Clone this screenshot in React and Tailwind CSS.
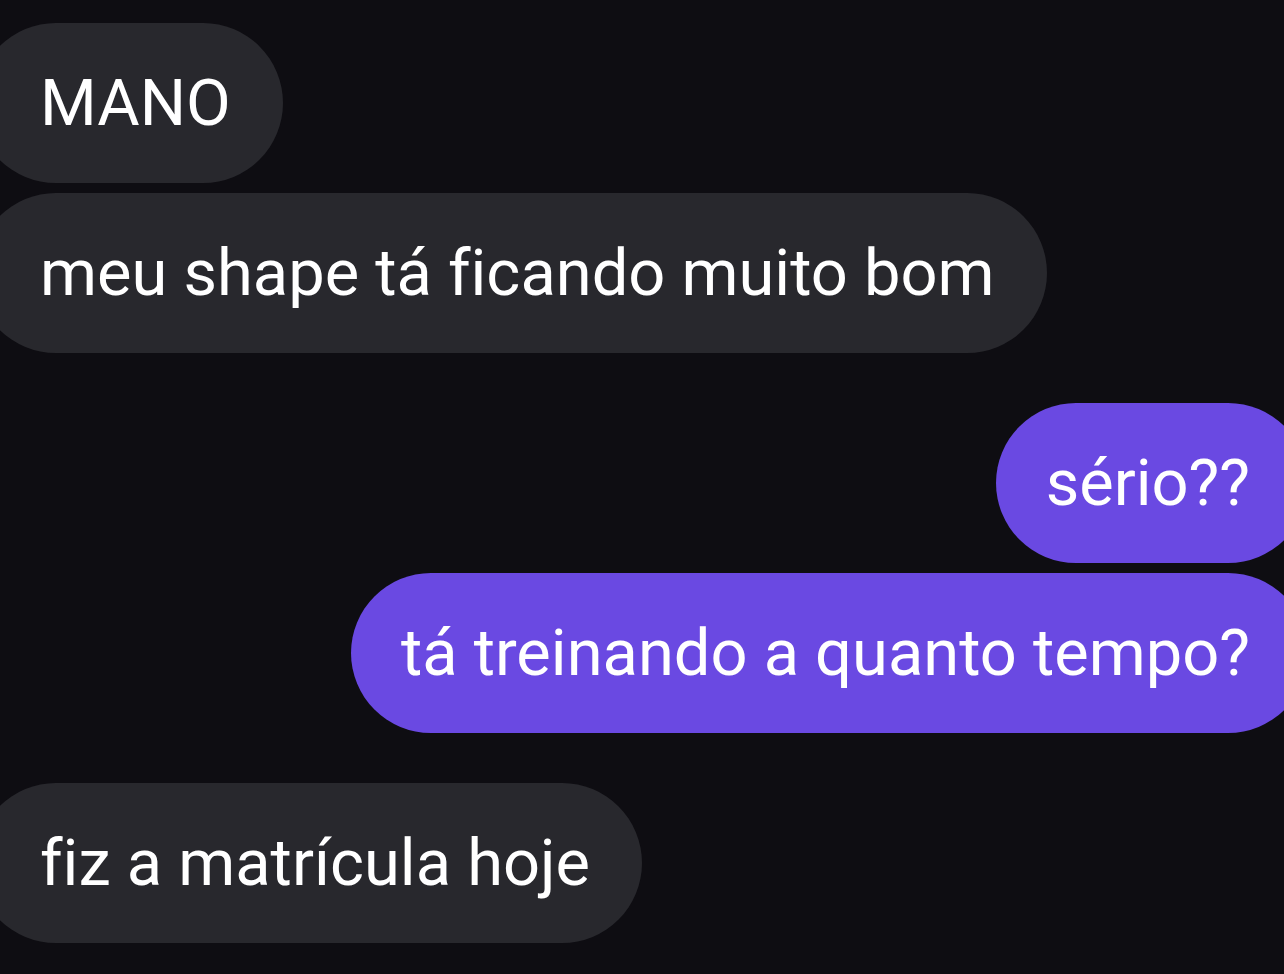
const messages = [
  { id: 1, from: 'them', text: 'MANO' },
  { id: 2, from: 'them', text: 'meu shape tá ficando muito bom' },
  { id: 3, from: 'me', text: 'sério??' },
  { id: 4, from: 'me', text: 'tá treinando a quanto tempo?' },
  { id: 5, from: 'them', text: 'fiz a matrícula hoje' },
];

const Bubble = ({ from, text }) => {
  if (from === 'me') {
    return (
      <div className="flex justify-end">
        <div className="-mr-[24px] h-[160px] flex items-center rounded-full bg-[#6a49e2] pl-[50px] pr-[58px] text-white">
          {text}
        </div>
      </div>
    );
  }
  return (
    <div className="flex justify-start">
      <div className="-ml-[24px] h-[160px] flex items-center rounded-full bg-[#28282d] pl-[64px] pr-[52px] text-white">
        {text}
      </div>
    </div>
  );
};

export default function App() {
  // group consecutive messages from the same sender
  const groups = [];
  messages.forEach((m) => {
    const last = groups[groups.length - 1];
    if (last && last.from === m.from) last.items.push(m);
    else groups.push({ from: m.from, items: [m] });
  });

  return (
    <div
      className="w-[1284px] h-[974px] overflow-hidden bg-[#0e0d12] pt-[23px] text-[65px] leading-none whitespace-nowrap [font-variant-ligatures:none]"
      style={{ fontFamily: 'Roboto, "Liberation Sans", sans-serif' }}
    >
      <div className="flex flex-col gap-[50px]">
        {groups.map((g, i) => (
          <div key={i} className="flex flex-col gap-[10px]">
            {g.items.map((m) => (
              <Bubble key={m.id} from={m.from} text={m.text} />
            ))}
          </div>
        ))}
      </div>
    </div>
  );
}
